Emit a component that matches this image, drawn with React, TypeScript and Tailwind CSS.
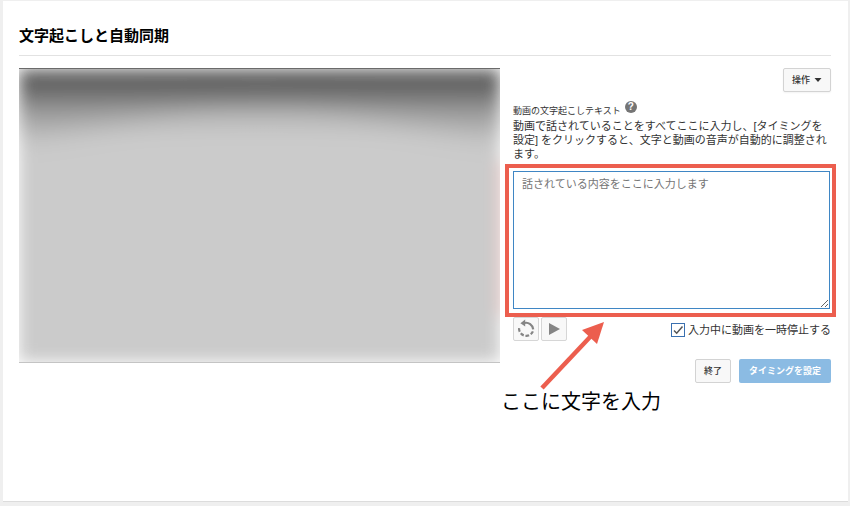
import { useState, type ReactNode } from "react";

type IconButtonProps = {
  label: string;
  children: ReactNode;
};

function IconButton({ label, children }: IconButtonProps) {
  return (
    <button
      type="button"
      aria-label={label}
      className="flex h-6 w-[26px] items-center justify-center rounded-xs border border-[#d6d6d6] bg-[#f8f8f8] text-[#858585]"
    >
      {children}
    </button>
  );
}

function VideoPreview() {
  return (
    <div className="aspect-[481/295] w-full overflow-hidden border-t border-b border-t-[#6b6b6b] border-b-[#c4c4c4] bg-white">
      <svg
        aria-hidden="true"
        className="block h-full w-full"
        viewBox="0 0 481 293"
        preserveAspectRatio="none"
      >
        <defs>
          <linearGradient id="shade" x1="0" y1="0" x2="0" y2="1">
            <stop offset="0" stopColor="#626262" />
            <stop offset="0.3" stopColor="#666666" />
            <stop offset="0.48" stopColor="#8c8c8c" />
            <stop offset="0.7" stopColor="#b8b8b8" />
            <stop offset="1" stopColor="#cbcbcb" />
          </linearGradient>
          <filter id="soft" x="-10%" y="-10%" width="120%" height="120%">
            <feGaussianBlur stdDeviation="8" />
          </filter>
          <filter id="corner" x="-20%" y="-60%" width="140%" height="220%">
            <feGaussianBlur stdDeviation="12" />
          </filter>
        </defs>
        <g filter="url(#soft)">
          <rect width="481" height="293" fill="#cbcbcb" />
          <rect width="481" height="68" fill="url(#shade)" />
          <g filter="url(#corner)" fill="#6e6e6e" opacity="0.35">
            <path d="M0 28H200Q90 56 0 66Z" />
            <path d="M481 28H281Q391 56 481 66Z" />
          </g>
          <rect x="480" y="92" width="4" height="154" fill="#f3b5ad" />
        </g>
      </svg>
    </div>
  );
}

export default function App() {
  const [text, setText] = useState("");
  const [pauseWhileTyping, setPauseWhileTyping] = useState(true);

  return (
    <div
      lang="ja"
      className="flex min-h-screen flex-col bg-[#efefef] pt-px pr-0.5 pb-1 pl-[3px] font-['Liberation_Sans','Noto_Sans_CJK_JP',sans-serif] text-[#333]"
    >
      <main className="flex-1 border-b border-[#dcdcdc] bg-white pt-6 pr-[17px] pl-4">
        <h1 className="border-b border-[#e2e2e2] pb-2 text-[15px] leading-[22px] font-bold text-black">
          文字起こしと自動同期
        </h1>

        <div className="mt-3 grid grid-cols-[481fr_318fr] items-start gap-[13px]">
          <VideoPreview />

          <section className="flex flex-col">
            <button
              type="button"
              className="flex h-6 w-12 items-center justify-center gap-1 self-end rounded-xs border border-[#d3d3d3] bg-[#f8f8f8] text-[9px] leading-3 font-medium shadow-xs"
            >
              操作
              <svg aria-hidden="true" className="h-1 w-2" viewBox="0 0 8 4">
                <path d="M0.5 0H7.5L4 4Z" fill="#333" />
              </svg>
            </button>

            <div className="mt-[9px] flex items-start gap-1">
              <label htmlFor="transcript" className="pt-1 text-[9px] leading-3">
                動画の文字起こしテキスト
              </label>
              <button
                type="button"
                aria-label="ヘルプ"
                className="flex h-3 w-3 items-center justify-center rounded-full bg-[#757575] text-[10px] leading-3 font-bold text-white"
              >
                ?
              </button>
            </div>
            <p className="mt-0.5 text-[11px] leading-[14px]">
              動画で話されていることをすべてここに入力し、[タイミングを設定]
              をクリックすると、文字と動画の音声が自動的に調整されます。
            </p>

            <div className="relative z-10 mt-2.5 mr-px">
              <textarea
                id="transcript"
                value={text}
                onChange={(event) => setText(event.target.value)}
                placeholder="話されている内容をここに入力します"
                className="block h-[138px] w-full resize border border-[#3f86c4] bg-white px-2 py-[5px] text-[11px] leading-[14px] outline-none placeholder:text-[#757575]"
              />

              {/* callout drawn over the form */}
              <div className="pointer-events-none absolute -top-[7px] -right-1.5 -bottom-2 -left-2 border-4 border-[#ec5e4e]" />
              <svg
                aria-hidden="true"
                className="pointer-events-none absolute top-[150px] left-7 h-[68px] w-16 overflow-visible"
                viewBox="0 0 64 68"
              >
                <path d="M1 67L50 15" stroke="#ec5e4e" strokeWidth="4.5" />
                <path d="M63 1L41 9L56 23Z" fill="#ec5e4e" />
              </svg>
              <p className="pointer-events-none absolute top-[219px] -left-3 text-xl leading-6 whitespace-nowrap text-black">
                ここに文字を入力
              </p>
            </div>

            <div className="mt-2 flex items-center justify-between">
              <div className="flex gap-0.5">
                <IconButton label="5 秒戻る">
                  <svg aria-hidden="true" className="h-5 w-5" viewBox="0 0 20 20" fill="none">
                    <path
                      d="M8.2 4A7.2 7.2 0 0 1 17.2 10.4"
                      stroke="currentColor"
                      strokeWidth="2.2"
                    />
                    <path d="M9.2 0.6V7.4L4.4 4.2Z" fill="currentColor" />
                    <path
                      d="M16.9 12.4A7.2 7.2 0 0 1 3.2 8.2"
                      stroke="currentColor"
                      strokeWidth="2.2"
                      strokeDasharray="3.6 1.8"
                    />
                  </svg>
                </IconButton>
                <IconButton label="再生">
                  <svg aria-hidden="true" className="h-3 w-3" viewBox="0 0 12 12">
                    <path d="M1 0L12 6L1 12Z" fill="currentColor" />
                  </svg>
                </IconButton>
              </div>

              <label className="flex items-center gap-[3px] pt-0.5 text-[11px] leading-[14px]">
                <span className="relative flex">
                  <input
                    type="checkbox"
                    checked={pauseWhileTyping}
                    onChange={(event) => setPauseWhileTyping(event.target.checked)}
                    className="h-3.5 w-3.5 appearance-none border border-[#3a70b0] bg-white"
                  />
                  {pauseWhileTyping && (
                    <svg
                      aria-hidden="true"
                      className="pointer-events-none absolute inset-0 h-3.5 w-3.5"
                      viewBox="0 0 14 14"
                      fill="none"
                    >
                      <path d="M3 7.5L5.7 10.2L11.5 3.5" stroke="#555" strokeWidth="1.5" />
                    </svg>
                  )}
                </span>
                入力中に動画を一時停止する
              </label>
            </div>

            <div className="mt-[18px] flex justify-end gap-2">
              <button
                type="button"
                className="h-6 rounded-xs border border-[#d3d3d3] bg-[#f8f8f8] px-2 text-[9px] leading-3 font-medium"
              >
                終了
              </button>
              <button
                type="button"
                className="h-6 rounded-xs bg-[#8bbbe3] px-2.5 text-[9px] leading-3 font-bold text-white"
              >
                タイミングを設定
              </button>
            </div>
          </section>
        </div>
      </main>
    </div>
  );
}
